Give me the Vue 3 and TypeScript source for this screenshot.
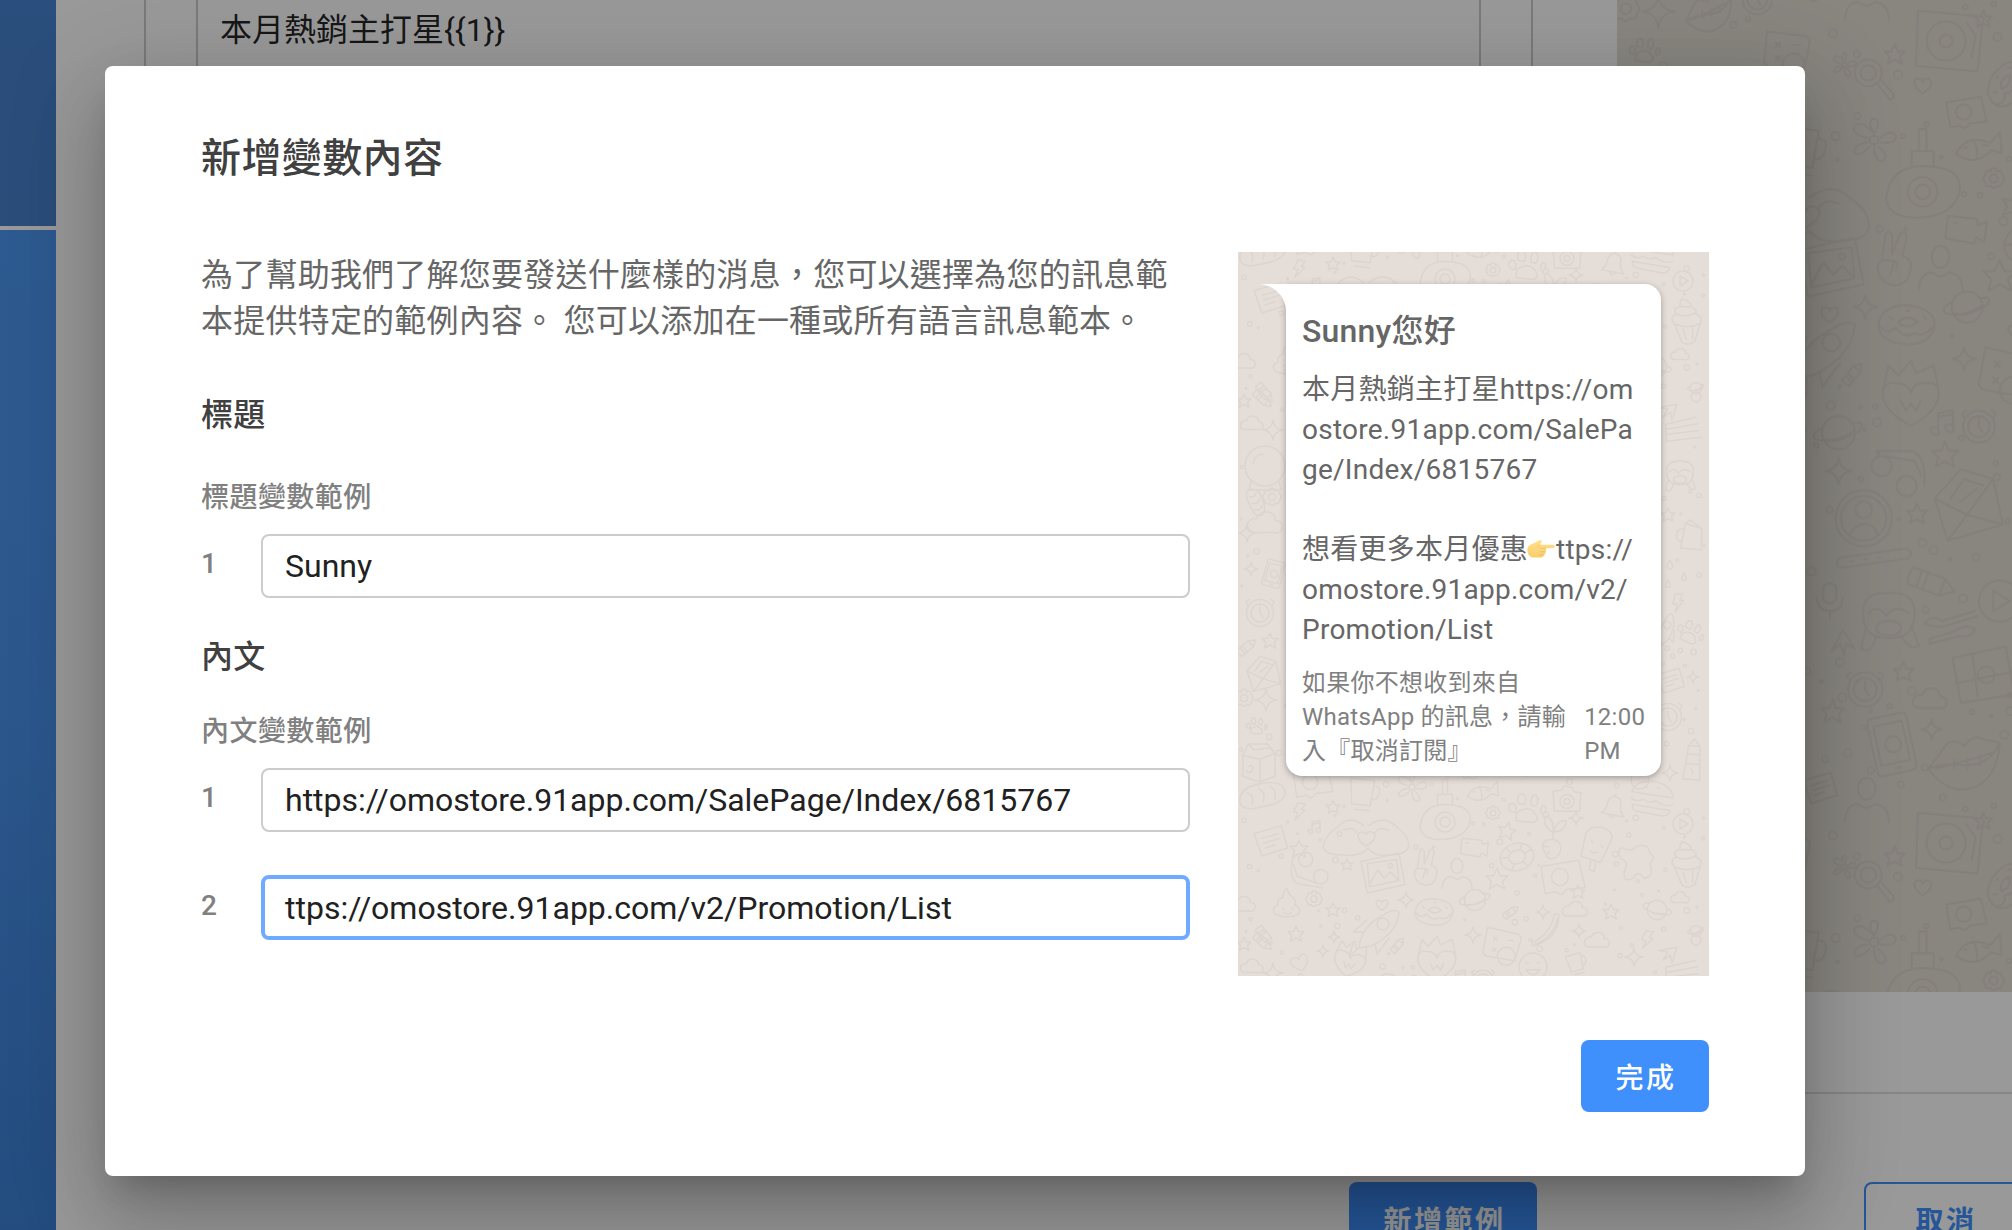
<script setup lang="ts">
import { ref } from 'vue'

interface Doodle {
  k: string
  x: number
  y: number
  s: number
  r: number
}

const TILE_W = 471
const TILE_H = 543

// Every shape is drawn around 0,0 in a box about 20 units wide.
const shapes: Record<string, string> = {
  flower:
    'M0-3C-6-12 6-12 0-3M3-1C10-8 14 3 3 1M2 3C10 9 0 14 0 3M-2 3C-10 11-12 2-3 1M-3-1C-14-3-8-12-1-4M2 0A2 2 0 1 1-2 0A2 2 0 1 1 2 0',
  star: 'M0-10L3-3L10-3L5 2L7 9L0 5L-7 9L-5 2L-10-3L-3-3Z',
  spark: 'M0-10Q1-1 10 0Q1 1 0 10Q-1 1-10 0Q-1-1 0-10Z',
  ring: 'M10 0A10 10 0 1 1-10 0A10 10 0 1 1 10 0',
  gear: 'M0-10Q3-10 3-7Q8-9 8-4Q12 0 8 4Q8 9 3 7Q0 12-3 7Q-8 9-8 4Q-12 0-8-4Q-8-9-3-7Q-3-10 0-10M4 0A4 4 0 1 1-4 0A4 4 0 1 1 4 0',
  heart: 'M0 9C-14 0-10-9-5-8Q-1-8 0-4Q1-8 5-8C10-9 14 0 0 9Z',
  cloud: 'M-7 5Q-12 4-10-1Q-7-4-5-3Q-3-8 2-7Q6-6 6-2Q11-2 10 3Q9 6 5 5Z',
  planet: 'M7 0A7 7 0 1 1-7 0A7 7 0 1 1 7 0M-7-2Q-13 1-9 3Q0 5 9-1Q12-5 6-4M-6 3Q0 4 7-1',
  donut:
    'M-10 0Q-9-7 0-7Q10-6 10 0Q9 7 0 7Q-10 6-10 0M-3-1Q0-4 4-1Q0 2-3-1M-10 0Q-7 4-4 1Q-1 5 3 3Q6 5 10 0M-6-3L-5-2M6-3L7-2M0-5L1-5',
  bolt: 'M-3-10L5-10L2-3L6-3L-3 10L-1 1L-6 1Z',
  bread: 'M-10 2Q-10-5 0-5Q11-5 10 1Q9 5 0 5Q-9 6-10 2M-6-2Q-3 0-5 3M-1-3Q2-1 0 3M4-3Q7-1 5 3',
  carton: 'M-8-4L-5-10L5-10L9-5L9 7L1 10L-8 7ZM-8-4L1-2L9-5M1-2L1 10M-5 2Q-2 0-3 4Q-5 6-6 4M-5-10L-2-7L7-8',
  mug: 'M-8-8L6-8L5 7L-6 7ZM6-5Q11-5 9 1Q8 4 5 3M-4 10L5 10',
  fish: 'M-10 1Q-4-7 5-1L10-5L9 4L5 2Q-3 8-10 1M-6-1L-5-1M-2-4Q0 0-2 5M2-1L4 0',
  paw: 'M-6 8Q-7 2-2 1Q3-1 6 4Q9 8 4 9ZM-10 2Q-12-3-8-3Q-5-1-7 3ZM-5-3Q-6-9-2-9Q1-7-1-2ZM3-2Q3-9 6-8Q9-6 6-1ZM9 2Q10-3 12-1Q13 3 10 4Z',
  camera: 'M-10-6L-4-7L-2-10L4-9L5-6L10-5L9 8L-9 8ZM5 1A5 5 0 1 1-5 1A5 5 0 1 1 5 1M2 1A2 2 0 1 1-2 1A2 2 0 1 1 2 1',
  bell: 'M-9 6Q-5 3-5-3Q-4-9 1-9Q7-8 6-2Q6 3 10 7ZM-2 7Q0 11 3 7M0-9L1-11',
  burger: 'M-10-2Q-8-8 0-8Q9-7 10-1ZM-10 1Q-7 3-4 1Q-1 3 2 1Q6 4 10 2M-9 4L9 5Q9 8 5 8L-6 7Q-9 7-9 4M-4-5L-3-5M2-5L3-5',
  play: 'M10 0A10 10 0 1 1-10 0A10 10 0 1 1 10 0M-3-5L5 0L-3 5Z',
  paper: 'M-10-4L7-9L11 5L-5 10ZM-5-1L5-4M-4 2L6-1M-3 5L3 3',
  note: 'M-4 6L-4-7L7-9L7 4M-4-4L7-6M-4 6A3 2 0 1 1-9 7A3 2 0 1 1-4 6M7 4A3 2 0 1 1 2 5A3 2 0 1 1 7 4',
  hands:
    'M0 4C-5 1-4-3-1-2Q0-2 0-1Q1-3 3-2C5-1 4 2 0 4M-1-5Q-7-10-12-5Q-18-1-19 4Q-19 8-10 8Q-3 9 1 5M1-5Q8-10 13-5Q19-1 19 4Q18 8 10 8Q4 9 1 5M-10-3Q-6-5-4-2M10-3Q6-5 4-2',
  palette:
    'M-10 2Q-9-7 0-7Q11-7 10 0Q8 7-2 7Q-9 7-10 2M4 0A4 4 0 1 1-4 0A4 4 0 1 1 4 0M2 0A2 2 0 1 1-2 0A2 2 0 1 1 2 0M-3-7L-3-11L3-11L3-7M-1-11L-1-17L1-17L1-11',
  sprout: 'M0-2Q-8-5-6-12Q0-11 0-2Q2-11 8-10Q8-3 0-2M0-2L0 3Q-7 3-6 9Q-3 16 0 16Q6 15 6 8Q5 3 0 3M-5 8L-2 8',
  bar: 'M-8-6Q-5-12 3-10Q9-8 7-3L3 10L-9 8ZM-3 9L-3 15L0 16L0 10M-4-2L-3-1M2 0L3 1M-4 4Q-2 6 0 4',
  splat: 'M-8-8Q-3-5 0-9Q7-10 7-5Q11-3 7 1Q10 8 4 9Q0 4-2 9Q-8 12-7 5Q-4 0-9-2Q-12-6-8-8',
  cupcake: 'M-8 0Q-11-4-6-6Q-8-10-3-10Q-3-13-1-15Q5-12 4-9Q8-7 6-4Q11-2 8 2L3 13Q-2 15-5 12ZM-8 0Q0 5 8 2M-6-6Q0-2 6-5M-3-10L4-9M-3 4L-2 11M3 4L2 11',
  video: 'M-10-6L4-6L5-3L9-5L9 5L5 3L4 6L-10 5ZM-7-3L-5-3',
  buoy: 'M10 0A10 8 0 1 1-10 0A10 8 0 1 1 10 0M5 0A5 4 0 1 1-5 0A5 4 0 1 1 5 0M-5-7L-3-4M5-7L3-4M-5 7L-3 4M5 7L3 4M-9-2L-5-1M9-2L5-1',
  vhand: 'M-7 1L-5-12Q-3-14-2-11L-2-2L2-12Q5-14 5-10L3-1Q8 0 7 5Q6 13-1 13Q-8 12-9 5Q-9 0-3 1Q2 1 0 5M-1 2L-3 8',
  person: 'M4-6A4 5 0 1 1-4-6A4 5 0 1 1 4-6M-10 9Q-9 1-4 1L0 3L4 1Q10 2 10 9',
  photo: 'M-10-5L8-9L11 6L-7 10ZM-7-4L7-6L8 4L-6 7ZM-6 6L-2-1L1 3L4 0L8 4M5-3A1 1 0 1 1 3-3A1 1 0 1 1 5-3',
  monkey: 'M-10 2Q-12-10 0-9Q12-10 10 2Q9 9 0 9Q-9 9-10 2M-8-1Q-5-5-1 0Q3-5 8-1M5 5A5 3 0 1 1-5 5A5 3 0 1 1 5 5M-9 4L-11 13Q-7 16-5 8M9 4L12 12Q8 14 5 8',
  bubble: 'M-10-5L8-8L11 5L2 6Q0 10-3 7L-8 8ZM3 0A4 4 0 1 1-5 0A4 4 0 1 1 3 0',
  cone: 'M-8 6Q-11 2-6 0Q-7-4-3-5Q-2-10 0-11Q1-7 4-5Q7-2 5 0Q10 2 8 6Q0 10-8 6M-3 2L-2 3M3 2L4 3M-2 5Q0 7 3 5',
  banana: 'M8-12Q8 4-8 9Q-11 10-10 7Q2 2 5-12ZM-8 8Q4 4 7-9',
  rocket: 'M-9 9Q-8-2 4-8Q9-11 11-9Q10 2-3 8ZM6-3A3 3 0 1 1 0-3A3 3 0 1 1 6-3M-7 1L-12 1L-5-5M-1 7L0 12L6 4M-9 9L-14 13L-12 7',
  card: 'M-9-9L8-7Q11-6 10-3L8 8L-8 7Q-11 6-10 3ZM-5-4L-3-2M-3-4L-5-2M3-3L6-3M2 1L5 1M-5 2L-3 4M-3 2L-5 4M8 6A5 5 0 1 1-2 6A5 5 0 1 1 8 6',
  flame: 'M0 12C-16 4-12-7-6-5Q-1-5 0-1Q1-6 7-5C12-6 15 4 0 12ZM-11-3L-9-12L-5-8L0-14L2-9L9-12L11-3M-4 2L-2 6L0 3L2 6L4 2',
  face: 'M10 0A10 10 0 1 1-10 0A10 10 0 1 1 10 0M-5-3L-3-3M3-3L5-3M-5 2Q0 9 5 2Z',
  clock: 'M9 0A9 9 0 1 1-9 0A9 9 0 1 1 9 0M6 0A6 6 0 1 1-6 0A6 6 0 1 1 6 0M0-4L0 0L2 3M-8-5Q-11-8-7-9M8-5Q11-8 7-9',
  envelope: 'M-10-2L-2-11L8-8L11 6L-6 11ZM-10-2L0 3L8-8M-6 11L0 3L11 6M-5-2L-1-8L5-6M-2-1L3-5',
  pencil: 'M-10-4L5-4L11 0L5 4L-10 4Q-12 0-10-4M-6-4L-6 4M-3-4L-3 4M5-4L5 4',
  phone: 'M-6-11L5-11Q7-11 7-9L7 9Q7 11 5 11L-6 11Q-8 11-8 9L-8-9Q-8-11-6-11M-6-8L5-8L5 7L-6 7ZM3 0A3 3 0 1 1-3 0A3 3 0 1 1 3 0M-1 9L1 9',
  lips: 'M-11 3L-5-5Q-2-6 0-4Q3-8 6-6L11-5Q8 2 0 2Q-6 1-11 3Q-5 11 2 9Q10 7 11-5M-9 3Q0 1 9-2M-3 0L-3 3M1 0L1 3M5-1L5 2',
  turntable: 'M-10-9L9-8Q11-8 10-6L9 9L-10 8ZM5 0A6 6 0 1 1-7 0A6 6 0 1 1 5 0M1 0A2 2 0 1 1-3 0A2 2 0 1 1 1 0M5-6L8-2L7 5',
  lens: 'M4-2A7 7 0 1 1-10-2A7 7 0 1 1 4-2M1-2A4 4 0 1 1-7-2A4 4 0 1 1 1-2M2 4L8 12Q11 12 10 9L4 2',
  gift: 'M-11-6L8-10L11 7L-8 10ZM-10 3L10-1M-4-8L-2 8M4 0A3 3 0 1 1-2 0A3 3 0 1 1 4 0',
  spoons: 'M-11-1Q-8-5-4-2L9-6M-11-1Q-6 1-3 0L10-4M-9 5L1 2Q5-1 9 1Q8 5 3 4L-9 7Z',
  profile: 'M10 0A10 10 0 1 1-10 0A10 10 0 1 1 10 0M8 0A8 8 0 1 1-8 0A8 8 0 1 1 8 0M3-3A3 3 0 1 1-3-3A3 3 0 1 1 3-3M-5 6Q-3 2 0 2Q4 2 5 6',
  phones: 'M-9-8L5-8Q11-6 10 6M-3-2A4 4 0 1 1-11-2A4 4 0 1 1-3-2M7 6A4 4 0 1 1-1 6A4 4 0 1 1 7 6M-6-6L6-4L9 2',
  stick: 'M-10-1.5L10-1.5Q12 0 10 1.5L-10 1.5Q-12 0-10-1.5M-7 0L-6 0M-3 0L-2 0M1 0L2 0',
  mic: 'M-4-8Q0-12 4-8L4 0Q0 5-4 0ZM-8-1Q-7 7 0 7Q8 7 8-1M0 7L0 12',
  fork: 'M-10-4L8-7M-10-1L9-3M-10 2L9 1M-10-4L-10 6L10 5',
  jug: 'M-6-9L6-7L8 8L-7 9ZM-6-5Q-12-5-11 1Q-10 5-7 4M-6-9L-3-12L6-7',
  tower: 'M-4-10L4-10L6 14L-6 14ZM-4-4L4-4M-5 3L5 3M-4-10L0-15L4-10M-1 6L1 10',
  drop: 'M0-8Q-7 2-4 5Q0 9 4 5Q6 1 0-8',
  ball: 'M10-2A10 10 0 1 1-10-2A10 10 0 1 1 10-2M-6-3Q-5-8-1-8M-7 6L-8 10L8 10L7 6',
  arrow: 'M-9 7L0-9L9 5L2 1L1 10L-2 1Z',
}

const raw: [string, number, number, number, number?][] = [
  ['bread', 24, 0, 2.3, -10], ['carton', 20, 511, 1.9], ['mug', 125, 541, 1.7, 6], ['bubble', 74, 530, 1.9],
  ['flower', 174, 535, 1.5], ['palette', 207, 27, 2.5], ['fish', 245, 540, 1.6, -10], ['paw', 288, 13, 1.6],
  ['camera', 329, 5, 1.4], ['bell', 375, 12, 1.2, 8], ['burger', 414, 3, 2.1, 6], ['bolt', 61, 17, 0.9, 12],
  ['star', 95, 12, 0.7], ['star', 61, 54, 0.9], ['star', 269, 36, 0.9, 12], ['play', 445, 29, 1],
  ['paper', 32, 45, 1.6], ['note', 77, 32, 0.7], ['hands', 128, 42, 2.25], ['gear', 255, 18, 0.7],
  ['sprout', 315, 40, 1.5, 5], ['spark', 338, 23, 0.7], ['bar', 360, 50, 1.7, 8], ['splat', 399, 67, 1.8],
  ['cupcake', 449, 70, 1.6, -8], ['video', 237, 53, 1.4, 6], ['buoy', 279, 62, 1.7, -15], ['vhand', 189, 72, 1.4],
  ['person', 219, 80, 1.5], ['star', 259, 84, 1.1], ['photo', 144, 77, 2.1], ['phones', 71, 76, 1.8, 190],
  ['bubble', 324, 82, 2.1], ['star', 340, 97, 0.7], ['star', 109, 70, 0.6], ['cone', 49, 110, 1.5],
  ['gear', 76, 104, 0.8], ['planet', 237, 105, 1.5], ['planet', 419, 115, 1.4, 28], ['donut', 196, 117, 1.9],
  ['cloud', 5, 110, 1.2], ['cloud', 337, 115, 1.2], ['cloud', 359, 146, 1.2], ['cloud', 442, 103, 0.9],
  ['banana', 309, 137, 1.5], ['spark', 168, 105, 0.8], ['spark', 305, 117, 0.7], ['spark', 341, 136, 0.7],
  ['spark', 235, 140, 0.8], ['spark', 96, 142, 0.6], ['spark', 85, 156, 0.6], ['star', 95, 115, 0.7],
  ['star', 373, 117, 0.8], ['star', 58, 139, 0.8], ['heart', 144, 110, 0.6], ['rocket', 139, 135, 2],
  ['card', 264, 150, 1.8, 6], ['flame', 199, 165, 1.7], ['face', 295, 172, 1.4], ['pencil', 25, 147, 1, 42],
  ['pencil', 273, 117, 0.8, -35], ['bolt', 409, 145, 0.9, 12], ['ring', 458, 145, 0.5], ['arrow', 432, 158, 1, 50],
  ['flame', 112, 165, 1.4, 15], ['pencil', 160, 150, 0.8, -50], ['heart', 62, 168, 0.9, -20], ['spark', 396, 162, 0.9],
  ['mug', 338, 168, 1.1, -15], ['fork', 445, 178, 1.7, -4], ['monkey', 442, 221, 1.3], ['star', 430, 263, 0.7],
  ['jug', 454, 285, 1.4, 8], ['drop', 432, 313, 0.6], ['drop', 446, 325, 0.5], ['drop', 430, 332, 0.5],
  ['bolt', 440, 351, 0.9], ['paw', 452, 380, 1.2, 20], ['rocket', 428, 378, 1.2, -30], ['paper', 432, 428, 1.3],
  ['clock', 430, 465, 1.5], ['spark', 455, 425, 0.6], ['tower', 455, 508, 1.4, 5], ['spark', 432, 521, 0.8],
  ['planet', 458, 136, 0.8], ['pencil', 27, 141, 1, 50], ['star', 6, 149, 0.7], ['cloud', 14, 172, 1.1],
  ['spark', 35, 178, 1], ['ball', 27, 218, 2], ['bread', 18, 250, 1.4, 70], ['gear', 34, 245, 0.9],
  ['cloud', 27, 272, 1.7], ['spark', 9, 281, 0.9], ['spark', 13, 317, 0.7], ['phone', 36, 322, 1.2, 15],
  ['clock', 22, 361, 1.5], ['pencil', 9, 395, 1, -40], ['star', 32, 389, 0.8], ['envelope', 25, 422, 1.6],
  ['gear', 6, 446, 0.9], ['spark', 28, 448, 1.1], ['paw', 18, 474, 0.9], ['lips', 62, 447, 1.5, -10],
  ['clock', 95, 440, 1.1], ['card', 115, 475, 1.5], ['planet', 150, 190, 1.6], ['note', 221, 183, 0.9],
  ['clock', 245, 186, 1.2], ['phones', 191, 216, 1.7], ['star', 222, 205, 0.9], ['spark', 150, 216, 0.9],
  ['envelope', 237, 239, 2.2], ['profile', 167, 248, 1.9], ['stick', 174, 275, 2.3, -8], ['star', 203, 245, 0.7],
  ['pencil', 213, 292, 1.5, 20], ['mic', 144, 303, 1.1], ['play', 259, 304, 1.4], ['monkey', 184, 314, 1.7],
  ['arrow', 153, 332, 0.9], ['spoons', 227, 321, 1.7], ['gift', 248, 354, 1.9], ['clock', 168, 364, 1.3],
  ['star', 194, 352, 0.7], ['cloud', 212, 371, 1.1], ['phone', 187, 401, 1.8, -12], ['lips', 235, 411, 2.2],
  ['spark', 213, 391, 0.7], ['star', 146, 379, 0.8], ['paper', 137, 430, 1.1], ['person', 169, 440, 1.5],
  ['turntable', 225, 468, 2.2, 2], ['star', 188, 477, 0.7], ['lens', 174, 492, 1.3], ['flower', 154, 484, 0.8],
  ['heart', 207, 498, 0.6], ['bubble', 236, 516, 1.3], ['donut', 264, 497, 1.6, -60], ['star', 248, 453, 0.6],
  ['cone', 100, 235, 1.5], ['gift', 330, 230, 1.7], ['camera', 375, 300, 1.6], ['spark', 90, 320, 1],
  ['bell', 310, 350, 1.5], ['planet', 370, 420, 1.5], ['hands', 320, 480, 1.8], ['star', 385, 500, 1],
  ['bolt', 385, 220, 1], ['cupcake', 85, 390, 1.3], ['ring', 402, 528, 0.9],
]

const doodles: Doodle[] = []
for (const [k, x, y, s, r = 0] of raw) {
  doodles.push({ k, x, y, s, r })
  // Shapes near the seam are repeated on the other side so the tile joins up.
  if (y < 32) doodles.push({ k, x, y: y + TILE_H, s, r })
  if (y > TILE_H - 32) doodles.push({ k, x, y: y - TILE_H, s, r })
}

// Small bubbles fill the gaps between the shapes.
const bubbles: { x: number; y: number; r: number }[] = []
let seed = 7
const next = () => {
  seed = (seed * 16807) % 2147483647
  return seed / 2147483647
}
for (let i = 0; i < 2600 && bubbles.length < 270; i++) {
  const x = next() * (TILE_W - 6) + 3
  const y = next() * (TILE_H - 6) + 3
  const r = [1, 1.6, 2.2, 2.8][Math.floor(next() * 4)]
  const free =
    doodles.every((d) => Math.hypot(d.x - x, d.y - y) > d.s * 9 + r + 1) &&
    bubbles.every((b) => Math.hypot(b.x - x, b.y - y) > 9)
  if (free) bubbles.push({ x, y, r })
}

const headerVars = ref(['Sunny'])
const bodyVars = ref(['https://omostore.91app.com/SalePage/Index/6815767', 'ttps://omostore.91app.com/v2/Promotion/List'])
const pageText = '本月熱銷主打星{{1}}'
</script>

<template>
  <div class="screen">
    <aside class="sidebar">
      <div class="side-top"></div>
      <div class="side-rest"></div>
    </aside>
    <main class="page">
      <div class="work">
        <div class="editor">
          <div class="card">
            <div class="field">{{ pageText }}</div>
          </div>
        </div>
        <div class="backdrop">
          <svg width="395" height="992">
            <defs>
              <pattern
                id="doodle-large"
                patternUnits="userSpaceOnUse"
                :width="TILE_W"
                :height="TILE_H"
                patternTransform="translate(0 152) scale(1.477)"
              >
                <g class="ink">
                  <path
                    v-for="(d, i) in doodles"
                    :key="i"
                    :d="shapes[d.k]"
                    :transform="`translate(${d.x} ${d.y}) rotate(${d.r}) scale(${d.s})`"
                    :stroke-width="1.5 / d.s"
                  />
                  <circle v-for="(b, i) in bubbles" :key="'b' + i" :cx="b.x" :cy="b.y" :r="b.r" stroke-width="1.3" />
                </g>
              </pattern>
            </defs>
            <rect width="395" height="992" fill="url(#doodle-large)" />
          </svg>
        </div>
      </div>
      <div class="rule"></div>
      <div class="page-actions">
        <button class="btn solid">新增範例</button>
        <button class="btn outline">取消</button>
      </div>
    </main>

    <div class="overlay">
      <section class="dialog">
        <h2>新增變數內容</h2>
        <div class="columns">
          <div class="form">
            <p class="intro">
              為了幫助我們了解您要發送什麼樣的消息，您可以選擇為您的訊息範<br />本提供特定的範例內容。 您可以添加在一種或所有語言訊息範本。
            </p>
            <h3>標題</h3>
            <div class="label">標題變數範例</div>
            <div v-for="(v, i) in headerVars" :key="i" class="row">
              <span class="num">{{ i + 1 }}</span>
              <div class="input">{{ v }}</div>
            </div>
            <h3 class="second">內文</h3>
            <div class="label second-label">內文變數範例</div>
            <div v-for="(v, i) in bodyVars" :key="i" class="row">
              <span class="num">{{ i + 1 }}</span>
              <div class="input" :class="{ focused: i === 1 }">{{ v }}</div>
            </div>
          </div>

          <div class="preview">
            <svg class="wall" width="471" height="724">
              <defs>
                <pattern id="doodle-small" patternUnits="userSpaceOnUse" :width="TILE_W" :height="TILE_H">
                  <g class="ink">
                    <path
                      v-for="(d, i) in doodles"
                      :key="i"
                      :d="shapes[d.k]"
                      :transform="`translate(${d.x} ${d.y}) rotate(${d.r}) scale(${d.s})`"
                      :stroke-width="1.5 / d.s"
                    />
                    <circle v-for="(b, i) in bubbles" :key="'b' + i" :cx="b.x" :cy="b.y" :r="b.r" stroke-width="1.3" />
                  </g>
                </pattern>
              </defs>
              <rect width="471" height="724" fill="url(#doodle-small)" />
            </svg>
            <div class="message">
              <svg class="tail" width="28" height="26" viewBox="0 0 28 26">
                <path d="M0 0H28V26H26C25 12 15 2 0 0Z" fill="#fff" />
              </svg>
              <div class="msg-title">Sunny您好</div>
              <div class="msg-body">
                <div>本月熱銷主打星https://om</div>
                <div>ostore.91app.com/SalePa</div>
                <div>ge/Index/6815767</div>
                <div>&nbsp;</div>
                <div class="with-icon">
                  <span>想看更多本月優惠</span>
                  <svg class="point" width="28" height="18" viewBox="0 0 28 18">
                    <defs>
                      <linearGradient id="skin" x1="0" y1="0" x2="0" y2="1">
                        <stop offset="0" stop-color="#ffe08a" />
                        <stop offset="1" stop-color="#f8cd6c" />
                      </linearGradient>
                    </defs>
                    <path
                      d="M0.4 9C0.6 6 3 4.7 6 3.6C8.5 2.6 10.500.6 13 .3C15 .1 15.400 1.800 14 3L12.800 4.700H26C28.200 4.700 28.200 7.900 26 8L18.600 8.300C19.800 9.500 19.500 11.200 18.200 11.700C18.900 13 18.300 14.500 17 14.800C17 16.700 15.500 17.600 13 17.600H7C3 17.600.3 15 .4 9Z"
                      fill="url(#skin)"
                    />
                    <path
                      d="M18.600 8.300H13.500M18.200 11.700H13.300M17 14.800H12.800M12.800 4.700L10.500 7"
                      fill="none"
                      stroke="#ebb862"
                      stroke-width=".7"
                      stroke-linecap="round"
                    />
                  </svg>
                  <span>ttps://</span>
                </div>
                <div>omostore.91app.com/v2/</div>
                <div>Promotion/List</div>
              </div>
              <div class="msg-foot">
                <div>如果你不想收到來自<br />WhatsApp 的訊息，請輸<br />入『取消訂閱』</div>
                <div class="time">12:00<br />PM</div>
              </div>
            </div>
          </div>
        </div>
        <div class="actions">
          <button class="btn done">完成</button>
        </div>
      </section>
    </div>
  </div>
</template>

<style>
body {
  margin: 0;
}
</style>

<style scoped>
.screen {
  position: relative;
  display: flex;
  width: 2012px;
  height: 1230px;
  overflow: hidden;
  background: #fff;
  font-family: Roboto, 'Noto Sans CJK TC', sans-serif;
  letter-spacing: 0.3px;
}
.screen * {
  box-sizing: border-box;
}
.sidebar {
  flex: none;
  display: flex;
  flex-direction: column;
  gap: 4px;
  width: 56px;
}
.side-top {
  height: 226px;
  background: linear-gradient(#4682d0, #4680cc);
}
.side-rest {
  flex: 1;
  background: linear-gradient(#4c96f0, #4a92ec 45%, #3c7fd4);
}
.page {
  flex: 1;
  display: flex;
  flex-direction: column;
  min-width: 0;
}
.work {
  flex: none;
  display: flex;
  height: 992px;
}
.editor {
  width: 1561px;
  padding: 0 84px 0 88px;
}
.card {
  height: 900px;
  padding: 0 50px;
  border: 2px solid #ccc;
  border-width: 0 2px;
}
.field {
  height: 400px;
  padding: 7px 0 0 22px;
  border: 2px solid #ccc;
  border-width: 0 2px;
  font-size: 32px;
  line-height: 46px;
  letter-spacing: 0;
  color: rgba(0, 0, 0, 0.87);
}
.backdrop {
  width: 395px;
  background: #e5dfd6;
}
.backdrop svg,
.wall {
  display: block;
}
.ink {
  fill: none;
  stroke: #ddd4cf;
  stroke-linecap: round;
  stroke-linejoin: round;
}
.backdrop .ink {
  stroke: #dcd4ce;
}
.rule {
  flex: none;
  height: 2px;
  margin: 100px 0 0 88px;
  background: #e0e0e0;
}
.page-actions {
  flex: none;
  display: flex;
  gap: 327px;
  margin: 88px 0 0 1293px;
}
.btn {
  flex: none;
  height: 72px;
  padding: 0;
  border: 0;
  border-radius: 8px;
  font: 500 28px/72px Roboto, 'Noto Sans CJK TC', sans-serif;
  letter-spacing: 2.5px;
}
.solid {
  width: 188px;
  padding: 4px 0 0 3px;
  background: #3f8ffd;
  font-weight: 700;
  color: #fff;
}
.outline {
  width: 164px;
  padding-top: 4px;
  border: 2px solid #3f8ffd;
  font-weight: 700;
  line-height: 68px;
  background: transparent;
  color: #3f8ffd;
}
.overlay {
  position: absolute;
  inset: 0;
  padding: 66px 0 0 105px;
  background: rgba(0, 0, 0, 0.4);
}
.dialog {
  display: flex;
  flex-direction: column;
  width: 1700px;
  height: 1110px;
  padding: 63px 96px 64px;
  border-radius: 8px;
  background: #fff;
  box-shadow:
    0 22px 30px -14px rgba(0, 0, 0, 0.2),
    0 48px 76px 6px rgba(0, 0, 0, 0.14),
    0 18px 92px 16px rgba(0, 0, 0, 0.12);
}
h2 {
  margin: 0;
  height: 123px;
  font-size: 40px;
  font-weight: 500;
  line-height: 60px;
  letter-spacing: 0.4px;
  color: #404040;
}
h3 {
  margin: 0;
  font-size: 32px;
  font-weight: 500;
  line-height: 46px;
  color: #404040;
}
.columns {
  display: flex;
  justify-content: space-between;
  height: 724px;
}
.form {
  width: 989px;
}
.intro {
  margin: 0 0 48px;
  font-size: 32px;
  line-height: 46px;
  letter-spacing: 0.22px;
  color: #666;
  white-space: nowrap;
}
.label {
  margin: 40px 0 16px;
  font-size: 28px;
  font-weight: 500;
  line-height: 40px;
  letter-spacing: 0.45px;
  color: #808080;
}
.second {
  margin-top: 36px;
}
.second-label {
  margin: 32px 0 16px;
}
.row {
  display: flex;
  align-items: flex-start;
}
.row + .row {
  margin-top: 43px;
}
.num {
  width: 60px;
  padding-top: 10px;
  font-size: 28px;
  font-weight: 500;
  line-height: 40px;
  color: #808080;
}
.row + .row .num {
  padding-top: 11px;
}
.input {
  flex: 1;
  height: 64px;
  padding: 0 22px;
  border: 2px solid #ccc;
  border-radius: 8px;
  font-size: 32px;
  line-height: 60px;
  letter-spacing: 0;
  color: #212121;
}
.input.focused {
  height: 65px;
  padding: 0 20px;
  border: 4px solid #6eaaff;
  line-height: 58px;
}
.preview {
  position: relative;
  width: 471px;
  height: 724px;
  padding: 32px 48px;
  background: #e5ddd8;
}
.wall {
  position: absolute;
  inset: 0;
}
.message {
  position: relative;
  width: 375px;
  height: 492px;
  padding: 24px 16px 0;
  border-radius: 0 16px 16px 16px;
  background: #fff;
  box-shadow: 0 2px 6px rgba(0, 0, 0, 0.3);
}
.tail {
  position: absolute;
  left: -26px;
  top: 0;
}
.msg-title {
  font-size: 32px;
  font-weight: 500;
  line-height: 46px;
  letter-spacing: 0.2px;
  color: #666;
}
.msg-body {
  margin-top: 16px;
  font-size: 28px;
  line-height: 40px;
  letter-spacing: 0.25px;
  color: #666;
  white-space: nowrap;
}
.msg-body div {
  height: 40px;
}
.with-icon {
  display: flex;
}
.point {
  flex: none;
  margin: 10px 1px 0 -1px;
}
.msg-foot {
  display: flex;
  margin-top: 16px;
  font-size: 24px;
  line-height: 34px;
  letter-spacing: 0.25px;
  color: #808080;
  white-space: nowrap;
}
.time {
  margin: 34px 0 0 18px;
}
.actions {
  display: flex;
  justify-content: flex-end;
  margin-top: 64px;
}
.done {
  width: 128px;
  padding: 3px 0 0 2px;
  background: #3f8ffd;
  color: #fff;
}
</style>
